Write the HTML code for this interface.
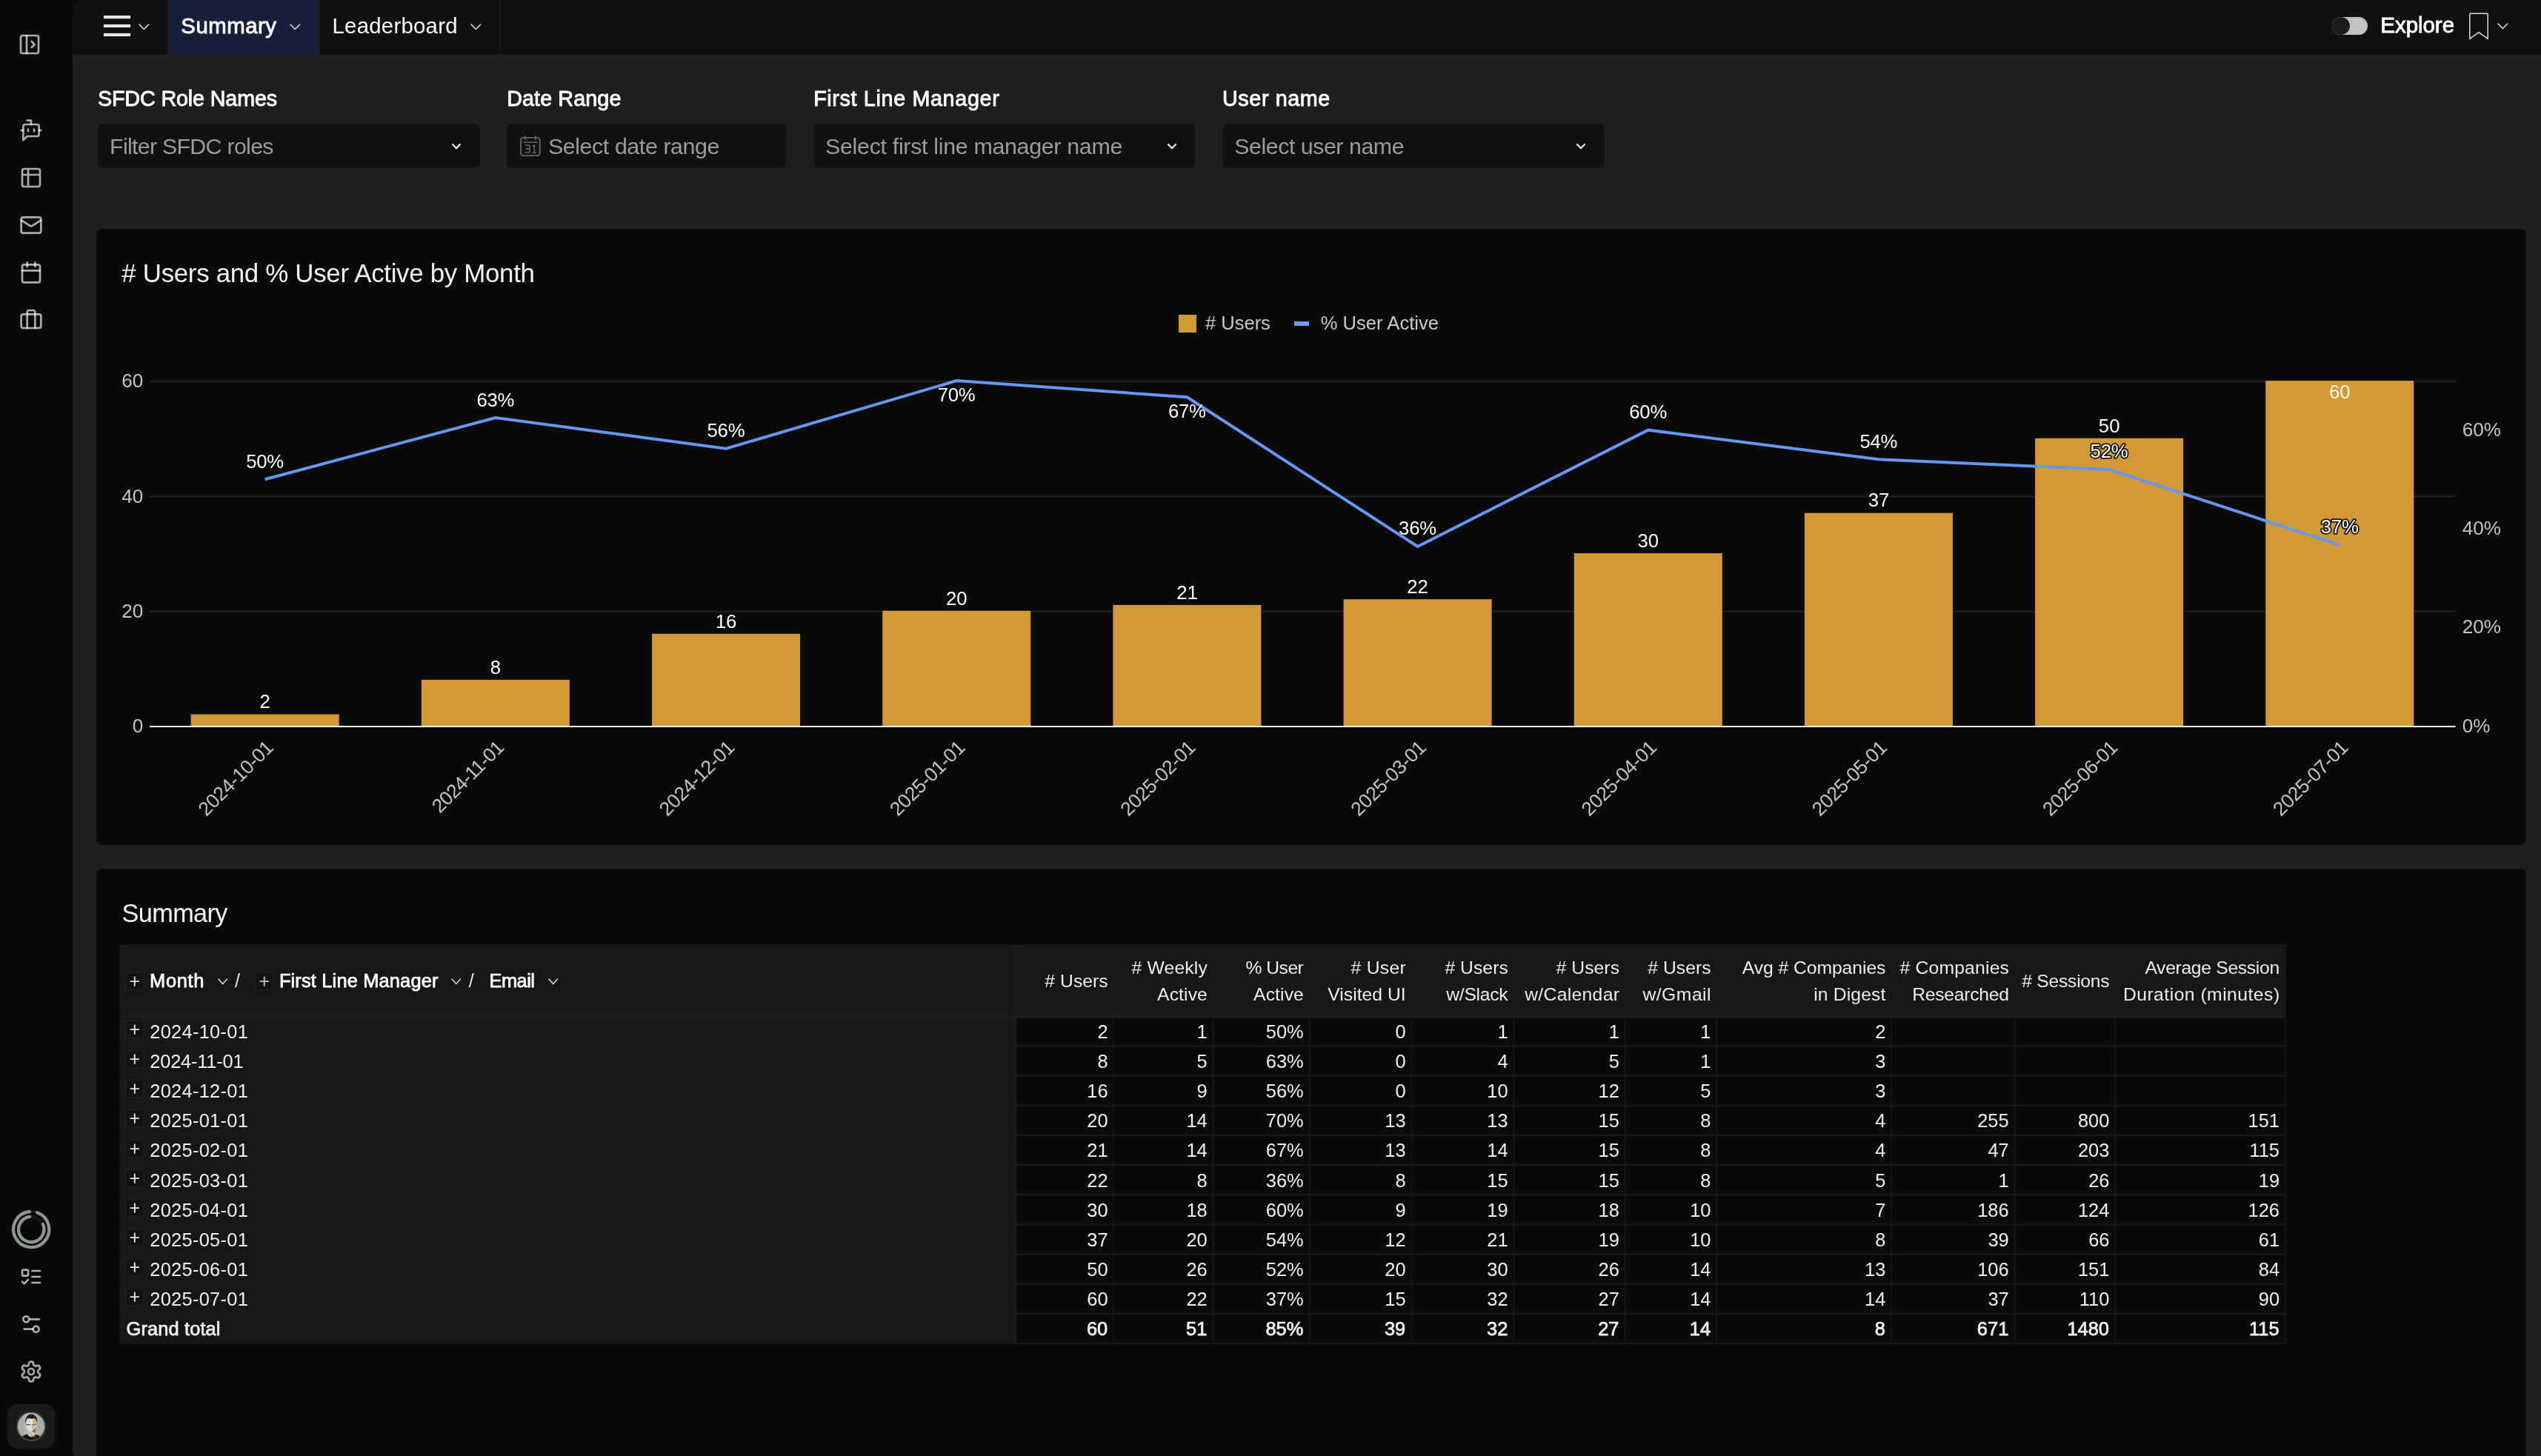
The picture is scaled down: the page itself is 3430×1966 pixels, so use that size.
<!DOCTYPE html>
<html lang="en"><head><meta charset="utf-8"><title>Summary</title>
<style>
html,body{margin:0;padding:0;background:#0a0a0a;}
body{width:3430px;height:1966px;overflow:hidden;position:relative;font-family:"Liberation Sans",sans-serif;}
#r{position:absolute;left:0;top:0;width:3430px;height:1966px;will-change:transform;}
.t{position:absolute;white-space:nowrap;line-height:1;}
.a{position:absolute;}
svg{position:absolute;overflow:visible;}
svg text{font-family:"Liberation Sans",sans-serif;}
.ic{fill:none;stroke:rgba(255,255,255,.66);stroke-width:2;stroke-linecap:round;stroke-linejoin:round;}
</style></head><body><div id="r">
<div class="a" style="left:98px;top:-2px;width:3332px;height:1977px;background:#1f1f1f;border-radius:19px 0 0 19px;overflow:hidden">
<div class="a" style="left:0;top:0;width:3332px;height:76px;background:#111"></div>
</div>
<svg class="ic" style="left:24px;top:44px" width="32" height="32" viewBox="0 0 24 24"><rect width="18" height="18" x="3" y="3" rx="2"/><path d="M9 3v18"/><path d="m14 9 3 3-3 3"/></svg>
<svg class="ic" style="left:26px;top:160px" width="32" height="32" viewBox="0 0 24 24"><path d="M12 6V2H8"/><path d="m8 18-4 4V8a2 2 0 0 1 2-2h12a2 2 0 0 1 2 2v8a2 2 0 0 1-2 2Z"/><path d="M2 12h2"/><path d="M9 11v2"/><path d="M15 11v2"/><path d="M20 12h2"/></svg>
<svg class="ic" style="left:26px;top:224px" width="32" height="32" viewBox="0 0 24 24"><path d="M9 3H5a2 2 0 0 0-2 2v4m6-6h10a2 2 0 0 1 2 2v4M9 3v18m0 0h10a2 2 0 0 0 2-2V9M9 21H5a2 2 0 0 1-2-2V9m0 0h18"/></svg>
<svg class="ic" style="left:26px;top:288px" width="32" height="32" viewBox="0 0 24 24"><rect width="20" height="16" x="2" y="4" rx="2"/><path d="m22 7-8.97 5.7a1.94 1.94 0 0 1-2.06 0L2 7"/></svg>
<svg class="ic" style="left:26px;top:352px" width="32" height="32" viewBox="0 0 24 24"><path d="M8 2v4"/><path d="M16 2v4"/><rect width="18" height="18" x="3" y="4" rx="2"/><path d="M3 10h18"/></svg>
<svg class="ic" style="left:26px;top:415px" width="32" height="32" viewBox="0 0 24 24"><rect width="20" height="14" x="2" y="7" rx="2" ry="2"/><path d="M16 21V5a2 2 0 0 0-2-2h-4a2 2 0 0 0-2 2v16"/></svg>
<svg style="left:12px;top:1630px" width="60" height="60" viewBox="12 1630 60 60" fill="none" stroke-linecap="round"><circle cx="42.2" cy="1660" r="24.1" stroke="#161616" stroke-width="4.3"/><circle cx="42.2" cy="1660" r="17.2" stroke="#161616" stroke-width="4.3"/><path d="M50.05 1637.21A24.1 24.1 0 1 1 39.89 1636.01" stroke="#8e968e" stroke-width="4.3"/><path d="M57.91 1653.00A17.2 17.2 0 1 1 40.25 1642.91" stroke="#8e968e" stroke-width="4.3"/></svg>
<svg class="ic" style="left:26px;top:1708px" width="32" height="32" viewBox="0 0 24 24"><rect x="3" y="5" width="6" height="6" rx="1"/><path d="m3 17 2 2 4-4"/><path d="M13 6h8"/><path d="M13 12h8"/><path d="M13 18h8"/></svg>
<svg class="ic" style="left:26px;top:1772px" width="32" height="32" viewBox="0 0 24 24"><path d="M20 7h-9"/><path d="M14 17H5"/><circle cx="17" cy="17" r="3"/><circle cx="7" cy="7" r="3"/></svg>
<svg class="ic" style="left:26px;top:1836px" width="32" height="32" viewBox="0 0 24 24"><path d="M12.22 2h-.44a2 2 0 0 0-2 2v.18a2 2 0 0 1-1 1.73l-.43.25a2 2 0 0 1-2 0l-.15-.08a2 2 0 0 0-2.73.73l-.22.38a2 2 0 0 0 .73 2.73l.15.1a2 2 0 0 1 1 1.72v.51a2 2 0 0 1-1 1.74l-.15.09a2 2 0 0 0-.73 2.73l.22.38a2 2 0 0 0 2.73.73l.15-.08a2 2 0 0 1 2 0l.43.25a2 2 0 0 1 1 1.73V20a2 2 0 0 0 2 2h.44a2 2 0 0 0 2-2v-.18a2 2 0 0 1 1-1.73l.43-.25a2 2 0 0 1 2 0l.15.08a2 2 0 0 0 2.73-.73l.22-.39a2 2 0 0 0-.73-2.73l-.15-.08a2 2 0 0 1-1-1.74v-.5a2 2 0 0 1 1-1.74l.15-.09a2 2 0 0 0 .73-2.73l-.22-.38a2 2 0 0 0-2.73-.73l-.15.08a2 2 0 0 1-2 0l-.43-.25a2 2 0 0 1-1-1.73V4a2 2 0 0 0-2-2z"/><circle cx="12" cy="12" r="3"/></svg>
<div class="a" style="left:10px;top:1896px;width:64px;height:60px;border-radius:14px;background:#1a1a1a"></div>
<svg style="left:22px;top:1906px" width="40" height="40" viewBox="0 0 40 40"><defs><clipPath id="av"><circle cx="20" cy="20" r="18.200"/></clipPath></defs><circle cx="20" cy="20" r="20" fill="#45433f"/><circle cx="20" cy="20" r="18.200" fill="#a9afa7"/><g clip-path="url(#av)"><rect x="10.500" y="2" width="18" height="36" fill="#b4b6b3"/><path d="M5 40c1-7 6-8.500 10-9.500h10c4 1 9 2.500 10 9.500z" fill="#101010"/><path d="M15.500 25h9.500v6.500c-2 3.500-7.500 3.500-9.500 0z" fill="#c9c9c7"/><ellipse cx="20.200" cy="17.500" rx="7.300" ry="9.300" fill="#dcdcda"/><path d="M12.600 17c-1.300-8 2-13.500 7.600-13.500s9.200 5 7.800 13.500c-.5-4.500-1.500-6.500-3-8-3 .8-7.500.8-9.800-.2-1.400 1.700-2.200 4-2.600 8.200z" fill="#1d1d1d"/><path d="M13 17.600h6.200M21.200 17.600h6.200" stroke="#4a4a4a" stroke-width="1.300"/><path d="M22 8.500l3.500 2.500l1 6.500l-2.500 3.500l-1 5l-1.500-4l1-5z" fill="#d8901c" opacity=".6"/><path d="M16 27l4 3.500l4.500 2l4.500-3l-3 4.500l-4 1z" fill="#d8901c" opacity=".5"/><path d="M20.500 26.500c2.500-.5 5-3 6-7l-1 9z" fill="#555" opacity=".8"/></g></svg>
<svg style="left:138px;top:18px" width="42" height="34" viewBox="138 18 42 34" fill="#e6e6e6" stroke="#000" stroke-width="1.800" paint-order="stroke"><rect x="139.900" y="20.900" width="36.300" height="4.300"/><rect x="139.900" y="32.800" width="36.300" height="4.300"/><rect x="139.900" y="44.800" width="36.300" height="4.300"/></svg>
<svg style="left:185.65px;top:30.65px" width="16.7" height="10.5" viewBox="-2 -2 16.7 10.5" fill="none" stroke="#dadada" stroke-width="1.6" stroke-linecap="round" stroke-linejoin="round"><path d="M0 0L6.35 6.5L12.7 0"/></svg>
<div class="a" style="left:226px;top:0;width:2px;height:74px;background:#1b1b1b"></div>
<div class="a" style="left:228px;top:0;width:202px;height:74px;background:#15213a"></div>
<div class="a" style="left:430px;top:0;width:2px;height:74px;background:#1b1b1b"></div>
<div class="a" style="left:674px;top:0;width:2px;height:74px;background:#1b1b1b"></div>
<span class="t" style="left:244.33px;top:20px;font-size:29.36px;color:#fff;letter-spacing:0.495px;-webkit-text-stroke:0.87px #fff;">Summary</span>
<svg style="left:389.75px;top:30.65px" width="16.7" height="10.5" viewBox="-2 -2 16.7 10.5" fill="none" stroke="#dadada" stroke-width="1.6" stroke-linecap="round" stroke-linejoin="round"><path d="M0 0L6.35 6.5L12.7 0"/></svg>
<span class="t" style="left:448.50px;top:20px;font-size:29.36px;color:#fff;letter-spacing:0.253px;">Leaderboard</span>
<svg style="left:633.75px;top:30.65px" width="16.7" height="10.5" viewBox="-2 -2 16.7 10.5" fill="none" stroke="#dadada" stroke-width="1.6" stroke-linecap="round" stroke-linejoin="round"><path d="M0 0L6.35 6.5L12.7 0"/></svg>
<div class="a" style="left:3148px;top:23px;width:48px;height:24px;border-radius:12px;background:#c2c2c2"></div>
<div class="a" style="left:3148px;top:23px;width:24px;height:24px;border-radius:12px;background:#1c1c1c"></div>
<span class="t" style="left:3213.34px;top:19px;font-size:29.51px;color:#fff;letter-spacing:-0.050px;-webkit-text-stroke:0.87px #fff;">Explore</span>
<svg style="left:3330px;top:15px" width="32" height="42" viewBox="3330 15 32 42" fill="none" stroke="#dcdcdc" stroke-width="1.5" stroke-linejoin="miter"><path d="M3333.8 19.5a1.2 1.2 0 0 1 1.2-1.2h22a1.2 1.2 0 0 1 1.2 1.200V52.3L3346 43.6L3333.8 52.3Z"/></svg>
<svg style="left:3369.75px;top:30.45px" width="16.7" height="10.5" viewBox="-2 -2 16.7 10.5" fill="none" stroke="#dadada" stroke-width="1.6" stroke-linecap="round" stroke-linejoin="round"><path d="M0 0L6.35 6.5L12.7 0"/></svg>
<div class="a" style="left:132px;top:167px;width:516px;height:60px;border-radius:7px;background:#111"></div>
<div class="a" style="left:684px;top:167px;width:378px;height:60px;border-radius:7px;background:#111"></div>
<div class="a" style="left:1098px;top:167px;width:516px;height:60px;border-radius:7px;background:#111"></div>
<div class="a" style="left:1650px;top:167px;width:516px;height:60px;border-radius:7px;background:#111"></div>
<span class="t" style="left:131.93px;top:119px;font-size:28.78px;color:#fff;letter-spacing:-0.162px;-webkit-text-stroke:0.85px #fff;">SFDC Role Names</span>
<span class="t" style="left:684.13px;top:119px;font-size:28.78px;color:#fff;letter-spacing:0.090px;-webkit-text-stroke:0.85px #fff;">Date Range</span>
<span class="t" style="left:1098.13px;top:119px;font-size:28.78px;color:#fff;letter-spacing:0.634px;-webkit-text-stroke:0.85px #fff;">First Line Manager</span>
<span class="t" style="left:1650.03px;top:119px;font-size:28.78px;color:#fff;letter-spacing:0.577px;-webkit-text-stroke:0.85px #fff;">User name</span>
<span class="t" style="left:148.10px;top:182px;font-size:30.38px;color:#9c9c9c;letter-spacing:-0.719px;">Filter SFDC roles</span>
<span class="t" style="left:739.90px;top:182px;font-size:30.38px;color:#9c9c9c;letter-spacing:-0.410px;">Select date range</span>
<span class="t" style="left:1114.10px;top:182px;font-size:30.38px;color:#9c9c9c;letter-spacing:-0.312px;">Select first line manager name</span>
<span class="t" style="left:1666.30px;top:182px;font-size:30.38px;color:#9c9c9c;letter-spacing:-0.476px;">Select user name</span>
<svg style="left:609.00px;top:192.90px" width="14" height="9.2" viewBox="-2 -2 14 9.2" fill="none" stroke="#f2f2f2" stroke-width="2.1" stroke-linecap="round" stroke-linejoin="round"><path d="M0 0L5.0 5.2L10 0"/></svg>
<svg style="left:1575.00px;top:192.90px" width="14" height="9.2" viewBox="-2 -2 14 9.2" fill="none" stroke="#f2f2f2" stroke-width="2.1" stroke-linecap="round" stroke-linejoin="round"><path d="M0 0L5.0 5.2L10 0"/></svg>
<svg style="left:2127.00px;top:192.90px" width="14" height="9.2" viewBox="-2 -2 14 9.2" fill="none" stroke="#f2f2f2" stroke-width="2.1" stroke-linecap="round" stroke-linejoin="round"><path d="M0 0L5.0 5.2L10 0"/></svg>
<svg style="left:700px;top:181px" width="32" height="32" viewBox="700 181 32 32" fill="none" stroke="#60646c" stroke-width="1.900"><rect x="703" y="185.900" width="25.800" height="24.200" rx="3.300"/><path d="M708.800 183.200v5.600M723 183.200v5.600"/><path d="M706.300 192h19.600" stroke-width="1.700"/><path d="M708.700 196h5.400a1 1 0 0 1 1 1v8a1 1 0 0 1 -1 1h-5.400M710 200.900h5M718.900 197.300l2.300-1.300v10M718.600 206h5.200" stroke-width="1.600"/></svg>
<div class="a" style="left:130px;top:309px;width:3280px;height:832px;border-radius:8px;background:#0a0a0a"></div>
<span class="t" style="left:164.30px;top:352px;font-size:34.88px;color:#f3f3f3;letter-spacing:-0.312px;"># Users and % User Active by Month</span>
<div class="a" style="left:1591px;top:425px;width:24px;height:24px;background:#d39934"></div>
<span class="t" style="left:1627.00px;top:424px;font-size:25.58px;color:#c9c9c9;letter-spacing:-0.038px;"># Users</span>
<div class="a" style="left:1747px;top:434px;width:20px;height:6px;background:#6a9df6"></div>
<span class="t" style="left:1782.70px;top:424px;font-size:25.58px;color:#c9c9c9;letter-spacing:0.013px;">% User Active</span>
<svg style="left:130px;top:309px" width="3280" height="831" viewBox="130 309 3280 831"><rect x="202.1" y="824.70" width="3112.5" height="2" fill="#222"/><rect x="202.1" y="669.40" width="3112.5" height="2" fill="#222"/><rect x="202.1" y="514.10" width="3112.5" height="2" fill="#222"/><rect x="257.70" y="964.47" width="200" height="15.53" fill="#d39934"/><rect x="568.88" y="917.88" width="200" height="62.12" fill="#d39934"/><rect x="880.06" y="855.76" width="200" height="124.24" fill="#d39934"/><rect x="1191.23" y="824.70" width="200" height="155.30" fill="#d39934"/><rect x="1502.41" y="816.93" width="200" height="163.07" fill="#d39934"/><rect x="1813.59" y="809.17" width="200" height="170.83" fill="#d39934"/><rect x="2124.77" y="747.05" width="200" height="232.95" fill="#d39934"/><rect x="2435.94" y="692.69" width="200" height="287.31" fill="#d39934"/><rect x="2747.12" y="591.75" width="200" height="388.25" fill="#d39934"/><rect x="3058.30" y="514.10" width="200" height="465.90" fill="#d39934"/><rect x="202.1" y="980.00" width="3112.5" height="2" fill="#f7f7f7"/><polyline points="357.70,647.21 668.88,564.02 980.06,605.62 1291.23,514.10 1602.41,536.29 1913.59,737.97 2224.77,580.66 2535.94,620.23 2847.12,633.90 3158.30,735.96" fill="none" stroke="#6498f3" stroke-width="4" stroke-linejoin="miter" stroke-linecap="butt"/><text font-size="25.73" fill="#fff" x="350.56" y="956.27" >2</text><text font-size="25.73" fill="#fff" x="661.74" y="909.68" >8</text><text font-size="25.73" fill="#fff" x="965.78" y="847.56" >16</text><text font-size="25.73" fill="#fff" x="1276.95" y="816.50" >20</text><text font-size="25.73" fill="#fff" x="1588.13" y="808.73" >21</text><text font-size="25.73" fill="#fff" x="1899.31" y="800.97" >22</text><text font-size="25.73" fill="#fff" x="2210.49" y="738.85" >30</text><text font-size="25.73" fill="#fff" x="2521.67" y="684.49" >37</text><text font-size="25.73" fill="#fff" x="2832.84" y="583.55" >50</text><text font-size="25.73" fill="#fff" x="3144.02" y="538.40" >60</text><text font-size="25.73" fill="#fff" letter-spacing="-0.227" x="332.20" y="631.71" >50%</text><text font-size="25.73" fill="#fff" letter-spacing="-0.227" x="643.38" y="548.52" >63%</text><text font-size="25.73" fill="#fff" letter-spacing="-0.227" x="954.56" y="590.12" >56%</text><text font-size="25.73" fill="#fff" letter-spacing="-0.227" x="1265.73" y="541.70" >70%</text><text font-size="25.73" fill="#fff" letter-spacing="-0.227" x="1576.91" y="563.89" >67%</text><text font-size="25.73" fill="#fff" letter-spacing="-0.227" x="1888.09" y="722.47" >36%</text><text font-size="25.73" fill="#fff" letter-spacing="-0.227" x="2199.27" y="565.16" >60%</text><text font-size="25.73" fill="#fff" letter-spacing="-0.227" x="2510.44" y="604.73" >54%</text><text font-size="25.73" fill="#fff" letter-spacing="-0.227" x="2821.62" y="618.40" stroke="#151515" stroke-width="3.6" paint-order="stroke" stroke-linejoin="round">52%</text><text font-size="25.73" fill="#fff" letter-spacing="-0.227" x="3132.80" y="720.46" stroke="#151515" stroke-width="3.6" paint-order="stroke" stroke-linejoin="round">37%</text><text font-size="26.16" fill="#c4c4c4" x="178.78" y="989.10" >0</text><text font-size="26.16" fill="#c4c4c4" x="164.26" y="833.80" >20</text><text font-size="26.16" fill="#c4c4c4" x="164.26" y="678.50" >40</text><text font-size="26.16" fill="#c4c4c4" x="164.26" y="523.20" >60</text><text font-size="26.16" fill="#c4c4c4" x="3323.70" y="988.50" >0%</text><text font-size="26.16" fill="#c4c4c4" x="3323.70" y="855.39" >20%</text><text font-size="26.16" fill="#c4c4c4" x="3323.70" y="722.27" >40%</text><text font-size="26.16" fill="#c4c4c4" x="3323.70" y="589.16" >60%</text><text font-size="26.45" fill="#c4c4c4" letter-spacing="-0.523" x="-130.60" y="0" transform="translate(370.80 1010.80) rotate(-45)" >2024-10-01</text><text font-size="26.16" fill="#c4c4c4" letter-spacing="-0.785" x="-124.80" y="0" transform="translate(681.98 1010.80) rotate(-45)" >2024-11-01</text><text font-size="26.45" fill="#c4c4c4" letter-spacing="-0.523" x="-130.60" y="0" transform="translate(993.16 1010.80) rotate(-45)" >2024-12-01</text><text font-size="26.45" fill="#c4c4c4" letter-spacing="-0.523" x="-130.60" y="0" transform="translate(1304.33 1010.80) rotate(-45)" >2025-01-01</text><text font-size="26.45" fill="#c4c4c4" letter-spacing="-0.523" x="-130.60" y="0" transform="translate(1615.51 1010.80) rotate(-45)" >2025-02-01</text><text font-size="26.45" fill="#c4c4c4" letter-spacing="-0.523" x="-130.60" y="0" transform="translate(1926.69 1010.80) rotate(-45)" >2025-03-01</text><text font-size="26.45" fill="#c4c4c4" letter-spacing="-0.523" x="-130.60" y="0" transform="translate(2237.87 1010.80) rotate(-45)" >2025-04-01</text><text font-size="26.45" fill="#c4c4c4" letter-spacing="-0.523" x="-130.60" y="0" transform="translate(2549.04 1010.80) rotate(-45)" >2025-05-01</text><text font-size="26.45" fill="#c4c4c4" letter-spacing="-0.523" x="-130.60" y="0" transform="translate(2860.22 1010.80) rotate(-45)" >2025-06-01</text><text font-size="26.45" fill="#c4c4c4" letter-spacing="-0.523" x="-130.60" y="0" transform="translate(3171.40 1010.80) rotate(-45)" >2025-07-01</text></svg>
<div class="a" style="left:130px;top:1173px;width:3280px;height:900px;border-radius:8px;background:#0a0a0a"></div>
<span class="t" style="left:164.60px;top:1216px;font-size:34.30px;color:#f3f3f3;letter-spacing:-0.652px;">Summary</span>
<div class="a" style="left:162px;top:1276.4px;width:2922.8px;height:96.1px;background:#171717"></div>
<div class="a" style="left:162px;top:1372.5px;width:1209.2px;height:441.7px;background:#171717"></div>
<svg style="left:160px;top:1274.4px" width="2926.8" height="541.8" viewBox="160 1274.4 2926.8 541.8"><rect x="162" y="1275.9" width="2922.8" height="1.5" fill="#1b1b1b"/><rect x="162" y="1411.95" width="2922.8" height="1.6" fill="#1b1b1b"/><rect x="162" y="1452.10" width="2922.8" height="1.6" fill="#1b1b1b"/><rect x="162" y="1492.25" width="2922.8" height="1.6" fill="#1b1b1b"/><rect x="162" y="1532.40" width="2922.8" height="1.6" fill="#1b1b1b"/><rect x="162" y="1572.55" width="2922.8" height="1.6" fill="#1b1b1b"/><rect x="162" y="1612.70" width="2922.8" height="1.6" fill="#1b1b1b"/><rect x="162" y="1652.85" width="2922.8" height="1.6" fill="#1b1b1b"/><rect x="162" y="1693.00" width="2922.8" height="1.6" fill="#1b1b1b"/><rect x="162" y="1733.15" width="2922.8" height="1.6" fill="#1b1b1b"/><rect x="162" y="1773.30" width="2922.8" height="1.6" fill="#1b1b1b"/><rect x="162" y="1813.45" width="2922.8" height="1.6" fill="#1b1b1b"/><rect x="162" y="1276.4" width="2" height="537.8" fill="#1a1a1a"/><rect x="1502.60" y="1276.4" width="1.500" height="537.8" fill="#1b1b1b"/><rect x="1636.80" y="1276.4" width="1.500" height="537.8" fill="#1b1b1b"/><rect x="1766.80" y="1276.4" width="1.500" height="537.8" fill="#1b1b1b"/><rect x="1904.60" y="1276.4" width="1.500" height="537.8" fill="#1b1b1b"/><rect x="2042.70" y="1276.4" width="1.500" height="537.8" fill="#1b1b1b"/><rect x="2192.90" y="1276.4" width="1.500" height="537.8" fill="#1b1b1b"/><rect x="2316.50" y="1276.4" width="1.500" height="537.8" fill="#1b1b1b"/><rect x="2552.40" y="1276.4" width="1.500" height="537.8" fill="#1b1b1b"/><rect x="2718.80" y="1276.4" width="1.500" height="537.8" fill="#1b1b1b"/><rect x="2854.50" y="1276.4" width="1.500" height="537.8" fill="#1b1b1b"/><rect x="3084.10" y="1276.4" width="1.500" height="537.8" fill="#1b1b1b"/><rect x="162" y="1371" width="2922.8" height="4" fill="#1c1c1c"/><rect x="1368" y="1276.4" width="4" height="537.8" fill="#1c1c1c"/></svg>
<div class="a" style="left:169.2px;top:1311.5px;width:21.5px;height:22px;border:2px solid #1c1c1c;background:#121212;box-sizing:content-box"></div>
<svg style="left:169.2px;top:1311.5px" width="26" height="26" viewBox="0 0 26 26" stroke="#dcdcdc" stroke-width="1.900" fill="none"><path d="M6.600 13.100h12.400M12.800 6.600v13.100"/></svg>
<span class="t" style="left:202.08px;top:1312px;font-size:25.44px;color:#fff;letter-spacing:0.684px;-webkit-text-stroke:0.75px #fff;">Month</span>
<svg style="left:292.75px;top:1320.25px" width="15.5" height="10.5" viewBox="-2 -2 15.5 10.5" fill="none" stroke="#d8d8d8" stroke-width="1.6" stroke-linecap="round" stroke-linejoin="round"><path d="M0 0L5.75 6.5L11.5 0"/></svg>
<span class="t" style="left:316.90px;top:1312px;font-size:25.44px;color:#e8e8e8;">/</span>
<div class="a" style="left:344.0px;top:1311.5px;width:21.5px;height:22px;border:2px solid #1c1c1c;background:#121212;box-sizing:content-box"></div>
<svg style="left:344.0px;top:1311.5px" width="26" height="26" viewBox="0 0 26 26" stroke="#bdbdbd" stroke-width="1.900" fill="none"><path d="M6.600 13.100h12.400M12.800 6.600v13.100"/></svg>
<span class="t" style="left:376.88px;top:1312px;font-size:25.44px;color:#fff;letter-spacing:0.149px;-webkit-text-stroke:0.75px #fff;">First Line Manager</span>
<svg style="left:608.25px;top:1320.25px" width="15.5" height="10.5" viewBox="-2 -2 15.5 10.5" fill="none" stroke="#d8d8d8" stroke-width="1.6" stroke-linecap="round" stroke-linejoin="round"><path d="M0 0L5.75 6.5L11.5 0"/></svg>
<span class="t" style="left:632.80px;top:1312px;font-size:25.44px;color:#e8e8e8;">/</span>
<span class="t" style="left:660.58px;top:1312px;font-size:25.44px;color:#fff;letter-spacing:-0.561px;-webkit-text-stroke:0.75px #fff;">Email</span>
<svg style="left:738.85px;top:1320.25px" width="15.5" height="10.5" viewBox="-2 -2 15.5 10.5" fill="none" stroke="#d8d8d8" stroke-width="1.6" stroke-linecap="round" stroke-linejoin="round"><path d="M0 0L5.75 6.5L11.5 0"/></svg>
<span class="t" style="left:1410.30px;top:1313px;font-size:24.71px;color:#ededed;letter-spacing:0.046px;"># Users</span>
<span class="t" style="left:1527.50px;top:1295px;font-size:24.71px;color:#ededed;letter-spacing:0.174px;"># Weekly</span>
<span class="t" style="left:1562.10px;top:1331px;font-size:24.71px;color:#ededed;letter-spacing:0.093px;">Active</span>
<span class="t" style="left:1681.50px;top:1295px;font-size:24.71px;color:#ededed;letter-spacing:-0.529px;">% User</span>
<span class="t" style="left:1692.10px;top:1331px;font-size:24.71px;color:#ededed;letter-spacing:0.093px;">Active</span>
<span class="t" style="left:1823.50px;top:1295px;font-size:24.71px;color:#ededed;letter-spacing:0.286px;"># User</span>
<span class="t" style="left:1792.20px;top:1331px;font-size:24.71px;color:#ededed;letter-spacing:0.026px;">Visited UI</span>
<span class="t" style="left:1950.40px;top:1295px;font-size:24.71px;color:#ededed;letter-spacing:0.046px;"># Users</span>
<span class="t" style="left:1952.32px;top:1331px;font-size:24.71px;color:#ededed;letter-spacing:-0.295px;">w/Slack</span>
<span class="t" style="left:2100.60px;top:1295px;font-size:24.71px;color:#ededed;letter-spacing:0.046px;"># Users</span>
<span class="t" style="left:2058.22px;top:1331px;font-size:24.71px;color:#ededed;letter-spacing:0.305px;">w/Calendar</span>
<span class="t" style="left:2224.20px;top:1295px;font-size:24.71px;color:#ededed;letter-spacing:0.046px;"># Users</span>
<span class="t" style="left:2217.42px;top:1331px;font-size:24.71px;color:#ededed;letter-spacing:0.496px;">w/Gmail</span>
<span class="t" style="left:2351.70px;top:1295px;font-size:24.71px;color:#ededed;letter-spacing:-0.056px;">Avg # Companies</span>
<span class="t" style="left:2448.20px;top:1331px;font-size:24.71px;color:#ededed;letter-spacing:0.148px;">in Digest</span>
<span class="t" style="left:2564.50px;top:1295px;font-size:24.71px;color:#ededed;letter-spacing:0.186px;"># Companies</span>
<span class="t" style="left:2581.30px;top:1331px;font-size:24.71px;color:#ededed;letter-spacing:-0.287px;">Researched</span>
<span class="t" style="left:2729.30px;top:1313px;font-size:24.71px;color:#ededed;letter-spacing:-0.281px;"># Sessions</span>
<span class="t" style="left:2895.40px;top:1295px;font-size:24.71px;color:#ededed;letter-spacing:-0.322px;">Average Session</span>
<span class="t" style="left:2865.90px;top:1331px;font-size:24.71px;color:#ededed;letter-spacing:0.474px;">Duration (minutes)</span>
<div class="a" style="left:169.2px;top:1376.9px;width:21.5px;height:22px;border:2px solid #1c1c1c;background:#121212;box-sizing:content-box"></div>
<svg style="left:169.2px;top:1376.9px" width="26" height="26" viewBox="0 0 26 26" stroke="#e6e6e6" stroke-width="1.900" fill="none"><path d="M6.600 13.100h12.400M12.800 6.600v13.100"/></svg>
<span class="t" style="left:202.30px;top:1381px;font-size:25.44px;color:#f0f0f0;letter-spacing:0.266px;">2024-10-01</span>
<span class="t" style="left:1481.38px;top:1381px;font-size:25.44px;color:#f0f0f0;">2</span>
<span class="t" style="left:1615.58px;top:1381px;font-size:25.44px;color:#f0f0f0;">1</span>
<span class="t" style="left:1708.83px;top:1381px;font-size:25.44px;color:#f0f0f0;">50%</span>
<span class="t" style="left:1883.38px;top:1381px;font-size:25.44px;color:#f0f0f0;">0</span>
<span class="t" style="left:2021.48px;top:1381px;font-size:25.44px;color:#f0f0f0;">1</span>
<span class="t" style="left:2171.68px;top:1381px;font-size:25.44px;color:#f0f0f0;">1</span>
<span class="t" style="left:2295.28px;top:1381px;font-size:25.44px;color:#f0f0f0;">1</span>
<span class="t" style="left:2531.18px;top:1381px;font-size:25.44px;color:#f0f0f0;">2</span>
<div class="a" style="left:169.2px;top:1417.1px;width:21.5px;height:22px;border:2px solid #1c1c1c;background:#121212;box-sizing:content-box"></div>
<svg style="left:169.2px;top:1417.1px" width="26" height="26" viewBox="0 0 26 26" stroke="#e6e6e6" stroke-width="1.900" fill="none"><path d="M6.600 13.100h12.400M12.800 6.600v13.100"/></svg>
<span class="t" style="left:202.30px;top:1421px;font-size:25.44px;color:#f0f0f0;letter-spacing:-0.222px;">2024-11-01</span>
<span class="t" style="left:1481.38px;top:1421px;font-size:25.44px;color:#f0f0f0;">8</span>
<span class="t" style="left:1615.58px;top:1421px;font-size:25.44px;color:#f0f0f0;">5</span>
<span class="t" style="left:1708.83px;top:1421px;font-size:25.44px;color:#f0f0f0;">63%</span>
<span class="t" style="left:1883.38px;top:1421px;font-size:25.44px;color:#f0f0f0;">0</span>
<span class="t" style="left:2021.48px;top:1421px;font-size:25.44px;color:#f0f0f0;">4</span>
<span class="t" style="left:2171.68px;top:1421px;font-size:25.44px;color:#f0f0f0;">5</span>
<span class="t" style="left:2295.28px;top:1421px;font-size:25.44px;color:#f0f0f0;">1</span>
<span class="t" style="left:2531.18px;top:1421px;font-size:25.44px;color:#f0f0f0;">3</span>
<div class="a" style="left:169.2px;top:1457.2px;width:21.5px;height:22px;border:2px solid #1c1c1c;background:#121212;box-sizing:content-box"></div>
<svg style="left:169.2px;top:1457.2px" width="26" height="26" viewBox="0 0 26 26" stroke="#e6e6e6" stroke-width="1.900" fill="none"><path d="M6.600 13.100h12.400M12.800 6.600v13.100"/></svg>
<span class="t" style="left:202.30px;top:1461px;font-size:25.44px;color:#f0f0f0;letter-spacing:0.266px;">2024-12-01</span>
<span class="t" style="left:1467.27px;top:1461px;font-size:25.44px;color:#f0f0f0;">16</span>
<span class="t" style="left:1615.58px;top:1461px;font-size:25.44px;color:#f0f0f0;">9</span>
<span class="t" style="left:1708.83px;top:1461px;font-size:25.44px;color:#f0f0f0;">56%</span>
<span class="t" style="left:1883.38px;top:1461px;font-size:25.44px;color:#f0f0f0;">0</span>
<span class="t" style="left:2007.37px;top:1461px;font-size:25.44px;color:#f0f0f0;">10</span>
<span class="t" style="left:2157.57px;top:1461px;font-size:25.44px;color:#f0f0f0;">12</span>
<span class="t" style="left:2295.28px;top:1461px;font-size:25.44px;color:#f0f0f0;">5</span>
<span class="t" style="left:2531.18px;top:1461px;font-size:25.44px;color:#f0f0f0;">3</span>
<div class="a" style="left:169.2px;top:1497.4px;width:21.5px;height:22px;border:2px solid #1c1c1c;background:#121212;box-sizing:content-box"></div>
<svg style="left:169.2px;top:1497.4px" width="26" height="26" viewBox="0 0 26 26" stroke="#e6e6e6" stroke-width="1.900" fill="none"><path d="M6.600 13.100h12.400M12.800 6.600v13.100"/></svg>
<span class="t" style="left:202.30px;top:1501px;font-size:25.44px;color:#f0f0f0;letter-spacing:0.266px;">2025-01-01</span>
<span class="t" style="left:1467.27px;top:1501px;font-size:25.44px;color:#f0f0f0;">20</span>
<span class="t" style="left:1601.47px;top:1501px;font-size:25.44px;color:#f0f0f0;">14</span>
<span class="t" style="left:1708.83px;top:1501px;font-size:25.44px;color:#f0f0f0;">70%</span>
<span class="t" style="left:1869.27px;top:1501px;font-size:25.44px;color:#f0f0f0;">13</span>
<span class="t" style="left:2007.37px;top:1501px;font-size:25.44px;color:#f0f0f0;">13</span>
<span class="t" style="left:2157.57px;top:1501px;font-size:25.44px;color:#f0f0f0;">15</span>
<span class="t" style="left:2295.28px;top:1501px;font-size:25.44px;color:#f0f0f0;">8</span>
<span class="t" style="left:2531.18px;top:1501px;font-size:25.44px;color:#f0f0f0;">4</span>
<span class="t" style="left:2669.22px;top:1501px;font-size:25.44px;color:#f0f0f0;">255</span>
<span class="t" style="left:2804.92px;top:1501px;font-size:25.44px;color:#f0f0f0;">800</span>
<span class="t" style="left:3034.52px;top:1501px;font-size:25.44px;color:#f0f0f0;">151</span>
<div class="a" style="left:169.2px;top:1537.5px;width:21.5px;height:22px;border:2px solid #1c1c1c;background:#121212;box-sizing:content-box"></div>
<svg style="left:169.2px;top:1537.5px" width="26" height="26" viewBox="0 0 26 26" stroke="#e6e6e6" stroke-width="1.900" fill="none"><path d="M6.600 13.100h12.400M12.800 6.600v13.100"/></svg>
<span class="t" style="left:202.30px;top:1541px;font-size:25.44px;color:#f0f0f0;letter-spacing:0.266px;">2025-02-01</span>
<span class="t" style="left:1467.27px;top:1541px;font-size:25.44px;color:#f0f0f0;">21</span>
<span class="t" style="left:1601.47px;top:1541px;font-size:25.44px;color:#f0f0f0;">14</span>
<span class="t" style="left:1708.83px;top:1541px;font-size:25.44px;color:#f0f0f0;">67%</span>
<span class="t" style="left:1869.27px;top:1541px;font-size:25.44px;color:#f0f0f0;">13</span>
<span class="t" style="left:2007.37px;top:1541px;font-size:25.44px;color:#f0f0f0;">14</span>
<span class="t" style="left:2157.57px;top:1541px;font-size:25.44px;color:#f0f0f0;">15</span>
<span class="t" style="left:2295.28px;top:1541px;font-size:25.44px;color:#f0f0f0;">8</span>
<span class="t" style="left:2531.18px;top:1541px;font-size:25.44px;color:#f0f0f0;">4</span>
<span class="t" style="left:2683.47px;top:1541px;font-size:25.44px;color:#f0f0f0;">47</span>
<span class="t" style="left:2804.92px;top:1541px;font-size:25.44px;color:#f0f0f0;">203</span>
<span class="t" style="left:3036.43px;top:1541px;font-size:25.44px;color:#f0f0f0;">115</span>
<div class="a" style="left:169.2px;top:1577.7px;width:21.5px;height:22px;border:2px solid #1c1c1c;background:#121212;box-sizing:content-box"></div>
<svg style="left:169.2px;top:1577.7px" width="26" height="26" viewBox="0 0 26 26" stroke="#e6e6e6" stroke-width="1.900" fill="none"><path d="M6.600 13.100h12.400M12.800 6.600v13.100"/></svg>
<span class="t" style="left:202.30px;top:1582px;font-size:25.44px;color:#f0f0f0;letter-spacing:0.266px;">2025-03-01</span>
<span class="t" style="left:1467.27px;top:1582px;font-size:25.44px;color:#f0f0f0;">22</span>
<span class="t" style="left:1615.58px;top:1582px;font-size:25.44px;color:#f0f0f0;">8</span>
<span class="t" style="left:1708.83px;top:1582px;font-size:25.44px;color:#f0f0f0;">36%</span>
<span class="t" style="left:1883.38px;top:1582px;font-size:25.44px;color:#f0f0f0;">8</span>
<span class="t" style="left:2007.37px;top:1582px;font-size:25.44px;color:#f0f0f0;">15</span>
<span class="t" style="left:2157.57px;top:1582px;font-size:25.44px;color:#f0f0f0;">15</span>
<span class="t" style="left:2295.28px;top:1582px;font-size:25.44px;color:#f0f0f0;">8</span>
<span class="t" style="left:2531.18px;top:1582px;font-size:25.44px;color:#f0f0f0;">5</span>
<span class="t" style="left:2697.58px;top:1582px;font-size:25.44px;color:#f0f0f0;">1</span>
<span class="t" style="left:2819.17px;top:1582px;font-size:25.44px;color:#f0f0f0;">26</span>
<span class="t" style="left:3048.77px;top:1582px;font-size:25.44px;color:#f0f0f0;">19</span>
<div class="a" style="left:169.2px;top:1617.8px;width:21.5px;height:22px;border:2px solid #1c1c1c;background:#121212;box-sizing:content-box"></div>
<svg style="left:169.2px;top:1617.8px" width="26" height="26" viewBox="0 0 26 26" stroke="#e6e6e6" stroke-width="1.900" fill="none"><path d="M6.600 13.100h12.400M12.800 6.600v13.100"/></svg>
<span class="t" style="left:202.30px;top:1622px;font-size:25.44px;color:#f0f0f0;letter-spacing:0.266px;">2025-04-01</span>
<span class="t" style="left:1467.27px;top:1622px;font-size:25.44px;color:#f0f0f0;">30</span>
<span class="t" style="left:1601.47px;top:1622px;font-size:25.44px;color:#f0f0f0;">18</span>
<span class="t" style="left:1708.83px;top:1622px;font-size:25.44px;color:#f0f0f0;">60%</span>
<span class="t" style="left:1883.38px;top:1622px;font-size:25.44px;color:#f0f0f0;">9</span>
<span class="t" style="left:2007.37px;top:1622px;font-size:25.44px;color:#f0f0f0;">19</span>
<span class="t" style="left:2157.57px;top:1622px;font-size:25.44px;color:#f0f0f0;">18</span>
<span class="t" style="left:2281.17px;top:1622px;font-size:25.44px;color:#f0f0f0;">10</span>
<span class="t" style="left:2531.18px;top:1622px;font-size:25.44px;color:#f0f0f0;">7</span>
<span class="t" style="left:2669.22px;top:1622px;font-size:25.44px;color:#f0f0f0;">186</span>
<span class="t" style="left:2804.92px;top:1622px;font-size:25.44px;color:#f0f0f0;">124</span>
<span class="t" style="left:3034.52px;top:1622px;font-size:25.44px;color:#f0f0f0;">126</span>
<div class="a" style="left:169.2px;top:1658.0px;width:21.5px;height:22px;border:2px solid #1c1c1c;background:#121212;box-sizing:content-box"></div>
<svg style="left:169.2px;top:1658.0px" width="26" height="26" viewBox="0 0 26 26" stroke="#e6e6e6" stroke-width="1.900" fill="none"><path d="M6.600 13.100h12.400M12.800 6.600v13.100"/></svg>
<span class="t" style="left:202.30px;top:1662px;font-size:25.44px;color:#f0f0f0;letter-spacing:0.266px;">2025-05-01</span>
<span class="t" style="left:1467.27px;top:1662px;font-size:25.44px;color:#f0f0f0;">37</span>
<span class="t" style="left:1601.47px;top:1662px;font-size:25.44px;color:#f0f0f0;">20</span>
<span class="t" style="left:1708.83px;top:1662px;font-size:25.44px;color:#f0f0f0;">54%</span>
<span class="t" style="left:1869.27px;top:1662px;font-size:25.44px;color:#f0f0f0;">12</span>
<span class="t" style="left:2007.37px;top:1662px;font-size:25.44px;color:#f0f0f0;">21</span>
<span class="t" style="left:2157.57px;top:1662px;font-size:25.44px;color:#f0f0f0;">19</span>
<span class="t" style="left:2281.17px;top:1662px;font-size:25.44px;color:#f0f0f0;">10</span>
<span class="t" style="left:2531.18px;top:1662px;font-size:25.44px;color:#f0f0f0;">8</span>
<span class="t" style="left:2683.47px;top:1662px;font-size:25.44px;color:#f0f0f0;">39</span>
<span class="t" style="left:2819.17px;top:1662px;font-size:25.44px;color:#f0f0f0;">66</span>
<span class="t" style="left:3048.77px;top:1662px;font-size:25.44px;color:#f0f0f0;">61</span>
<div class="a" style="left:169.2px;top:1698.1px;width:21.5px;height:22px;border:2px solid #1c1c1c;background:#121212;box-sizing:content-box"></div>
<svg style="left:169.2px;top:1698.1px" width="26" height="26" viewBox="0 0 26 26" stroke="#e6e6e6" stroke-width="1.900" fill="none"><path d="M6.600 13.100h12.400M12.800 6.600v13.100"/></svg>
<span class="t" style="left:202.30px;top:1702px;font-size:25.44px;color:#f0f0f0;letter-spacing:0.266px;">2025-06-01</span>
<span class="t" style="left:1467.27px;top:1702px;font-size:25.44px;color:#f0f0f0;">50</span>
<span class="t" style="left:1601.47px;top:1702px;font-size:25.44px;color:#f0f0f0;">26</span>
<span class="t" style="left:1708.83px;top:1702px;font-size:25.44px;color:#f0f0f0;">52%</span>
<span class="t" style="left:1869.27px;top:1702px;font-size:25.44px;color:#f0f0f0;">20</span>
<span class="t" style="left:2007.37px;top:1702px;font-size:25.44px;color:#f0f0f0;">30</span>
<span class="t" style="left:2157.57px;top:1702px;font-size:25.44px;color:#f0f0f0;">26</span>
<span class="t" style="left:2281.17px;top:1702px;font-size:25.44px;color:#f0f0f0;">14</span>
<span class="t" style="left:2517.07px;top:1702px;font-size:25.44px;color:#f0f0f0;">13</span>
<span class="t" style="left:2669.22px;top:1702px;font-size:25.44px;color:#f0f0f0;">106</span>
<span class="t" style="left:2804.92px;top:1702px;font-size:25.44px;color:#f0f0f0;">151</span>
<span class="t" style="left:3048.77px;top:1702px;font-size:25.44px;color:#f0f0f0;">84</span>
<div class="a" style="left:169.2px;top:1738.2px;width:21.5px;height:22px;border:2px solid #1c1c1c;background:#121212;box-sizing:content-box"></div>
<svg style="left:169.2px;top:1738.2px" width="26" height="26" viewBox="0 0 26 26" stroke="#e6e6e6" stroke-width="1.900" fill="none"><path d="M6.600 13.100h12.400M12.800 6.600v13.100"/></svg>
<span class="t" style="left:202.30px;top:1742px;font-size:25.44px;color:#f0f0f0;letter-spacing:0.266px;">2025-07-01</span>
<span class="t" style="left:1467.27px;top:1742px;font-size:25.44px;color:#f0f0f0;">60</span>
<span class="t" style="left:1601.47px;top:1742px;font-size:25.44px;color:#f0f0f0;">22</span>
<span class="t" style="left:1708.83px;top:1742px;font-size:25.44px;color:#f0f0f0;">37%</span>
<span class="t" style="left:1869.27px;top:1742px;font-size:25.44px;color:#f0f0f0;">15</span>
<span class="t" style="left:2007.37px;top:1742px;font-size:25.44px;color:#f0f0f0;">32</span>
<span class="t" style="left:2157.57px;top:1742px;font-size:25.44px;color:#f0f0f0;">27</span>
<span class="t" style="left:2281.17px;top:1742px;font-size:25.44px;color:#f0f0f0;">14</span>
<span class="t" style="left:2517.07px;top:1742px;font-size:25.44px;color:#f0f0f0;">14</span>
<span class="t" style="left:2683.47px;top:1742px;font-size:25.44px;color:#f0f0f0;">37</span>
<span class="t" style="left:2806.83px;top:1742px;font-size:25.44px;color:#f0f0f0;">110</span>
<span class="t" style="left:3048.77px;top:1742px;font-size:25.44px;color:#f0f0f0;">90</span>
<span class="t" style="left:170.58px;top:1782px;font-size:25.44px;color:#f0f0f0;letter-spacing:0.107px;-webkit-text-stroke:0.75px #f0f0f0;">Grand total</span>
<span class="t" style="left:1466.89px;top:1782px;font-size:25.44px;color:#f0f0f0;-webkit-text-stroke:0.75px #f0f0f0;">60</span>
<span class="t" style="left:1601.09px;top:1782px;font-size:25.44px;color:#f0f0f0;-webkit-text-stroke:0.75px #f0f0f0;">51</span>
<span class="t" style="left:1708.45px;top:1782px;font-size:25.44px;color:#f0f0f0;-webkit-text-stroke:0.75px #f0f0f0;">85%</span>
<span class="t" style="left:1868.89px;top:1782px;font-size:25.44px;color:#f0f0f0;-webkit-text-stroke:0.75px #f0f0f0;">39</span>
<span class="t" style="left:2006.99px;top:1782px;font-size:25.44px;color:#f0f0f0;-webkit-text-stroke:0.75px #f0f0f0;">32</span>
<span class="t" style="left:2157.19px;top:1782px;font-size:25.44px;color:#f0f0f0;-webkit-text-stroke:0.75px #f0f0f0;">27</span>
<span class="t" style="left:2280.79px;top:1782px;font-size:25.44px;color:#f0f0f0;-webkit-text-stroke:0.75px #f0f0f0;">14</span>
<span class="t" style="left:2530.81px;top:1782px;font-size:25.44px;color:#f0f0f0;-webkit-text-stroke:0.75px #f0f0f0;">8</span>
<span class="t" style="left:2668.85px;top:1782px;font-size:25.44px;color:#f0f0f0;-webkit-text-stroke:0.75px #f0f0f0;">671</span>
<span class="t" style="left:2790.43px;top:1782px;font-size:25.44px;color:#f0f0f0;-webkit-text-stroke:0.75px #f0f0f0;">1480</span>
<span class="t" style="left:3036.05px;top:1782px;font-size:25.44px;color:#f0f0f0;-webkit-text-stroke:0.75px #f0f0f0;">115</span>
</div></body></html>
